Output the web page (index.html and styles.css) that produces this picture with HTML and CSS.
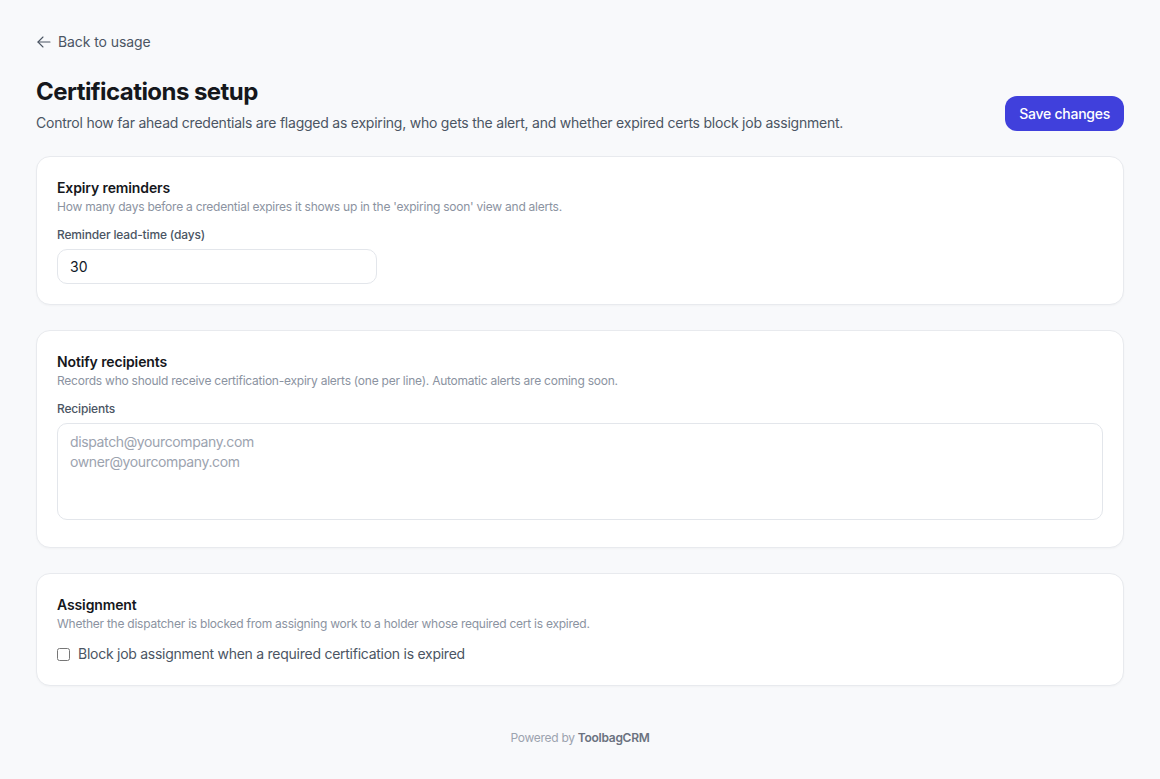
FILE: index.html
```html
<!DOCTYPE html>
<html lang="en">
<head>
<meta charset="utf-8">
<title>Certifications setup</title>
<link rel="stylesheet" href="styles.css">
</head>
<body>
<main class="page">
  <a class="back" href="#">
    <svg class="back-icon" width="16" height="16" viewBox="0 0 24 24" fill="none" stroke="currentColor" stroke-width="1.6" stroke-linecap="round" stroke-linejoin="round"><path d="M10.5 19.5 3 12l7.5-7.5"/><path d="M3 12h18"/></svg>
    <span>Back to usage</span>
  </a>

  <header class="header">
    <div class="header-text">
      <h1 class="title">Certifications setup</h1>
      <p class="subtitle">Control how far ahead credentials are flagged as expiring, who gets the alert, and whether expired certs block job assignment.</p>
    </div>
    <button class="btn-primary" type="button">Save changes</button>
  </header>

  <section class="card">
    <h2 class="card-title">Expiry reminders</h2>
    <p class="card-desc">How many days before a credential expires it shows up in the 'expiring soon' view and alerts.</p>
    <label class="field-label" for="lead">Reminder lead-time (days)</label>
    <input class="input" id="lead" type="text" value="30">
  </section>

  <section class="card">
    <h2 class="card-title">Notify recipients</h2>
    <p class="card-desc">Records who should receive certification-expiry alerts (one per line). Automatic alerts are coming soon.</p>
    <label class="field-label" for="rec">Recipients</label>
    <textarea class="textarea" id="rec" placeholder="dispatch@yourcompany.com&#10;owner@yourcompany.com"></textarea>
  </section>

  <section class="card">
    <h2 class="card-title">Assignment</h2>
    <p class="card-desc">Whether the dispatcher is blocked from assigning work to a holder whose required cert is expired.</p>
    <label class="check-row">
      <input class="checkbox" type="checkbox">
      <span>Block job assignment when a required certification is expired</span>
    </label>
  </section>

  <footer class="footer">Powered by <strong>ToolbagCRM</strong></footer>
</main>
</body>
</html>
```

FILE: styles.css
```css
* { box-sizing: border-box; }

html, body {
  margin: 0;
  padding: 0;
  background: #f8f9fb;
  font-family: Inter, "Noto Sans", sans-serif;
  color: #111827;
}

.page {
  padding: 32px 36px 40px;
  display: flex;
  flex-direction: column;
}

.back {
  display: flex;
  align-items: center;
  gap: 6px;
  align-self: flex-start;
  color: #4b5563;
  text-decoration: none;
  font-size: 14px;
  line-height: 20px;
  letter-spacing: -0.08px;
}

.back-icon { display: block; }

.header {
  display: flex;
  justify-content: space-between;
  align-items: flex-end;
  margin-top: 24px;
  margin-bottom: 23px;
}

.title {
  margin: 0;
  font-size: 24px;
  line-height: 32px;
  font-weight: 700;
  letter-spacing: -0.55px;
  color: #15171c;
}

.subtitle {
  margin: 5px 0 0;
  font-size: 14px;
  line-height: 20px;
  letter-spacing: -0.23px;
  color: #4b5563;
}

.btn-primary {
  font-family: inherit;
  font-size: 14px;
  font-weight: 500;
  line-height: 20px;
  letter-spacing: -0.25px;
  color: #fff;
  background: #4040dc;
  border: none;
  border-radius: 12px;
  padding: 7.5px 14px;
  margin-bottom: 2px;
  cursor: pointer;
}

.card {
  background: #fff;
  border: 1px solid #e8eaee;
  border-radius: 14px;
  box-shadow: 0 1px 2px rgba(16, 24, 40, 0.03);
  padding: 21px 20px 20px;
  margin-bottom: 25px;
  display: flex;
  flex-direction: column;
  align-items: flex-start;
}

.card-last {
  padding-bottom: 21px;
}

.card-title {
  margin: 0;
  font-size: 14px;
  line-height: 20px;
  font-weight: 600;
  letter-spacing: -0.12px;
  color: #15171c;
}

.card-desc {
  margin: 1px 0 0;
  font-size: 12px;
  line-height: 16px;
  letter-spacing: -0.24px;
  color: #8b93a1;
}

.field-label {
  margin-top: 12px;
  font-size: 12px;
  line-height: 16px;
  font-weight: 500;
  letter-spacing: -0.16px;
  color: #4b5563;
}

.input {
  margin-top: 6px;
  width: 320px;
  height: 35px;
  border: 1px solid #e3e6eb;
  border-radius: 10px;
  padding: 0 12px;
  font-family: inherit;
  font-size: 14px;
  color: #111827;
  background: #fff;
  outline: none;
}

.textarea {
  margin-top: 6px;
  margin-bottom: 7px;
  width: 100%;
  height: 97px;
  border: 1px solid #e3e6eb;
  border-radius: 10px;
  padding: 8px 12px;
  font-family: inherit;
  font-size: 14px;
  line-height: 20px;
  letter-spacing: -0.37px;
  color: #111827;
  background: #fff;
  resize: none;
  outline: none;
}

.textarea::placeholder { color: #9ca3af; }

.check-row {
  margin-top: 12px;
  margin-bottom: 1px;
  display: flex;
  align-items: center;
  gap: 8px;
  font-size: 14px;
  line-height: 20px;
  letter-spacing: -0.26px;
  color: #4b5563;
}

.checkbox {
  margin: 0;
  width: 13px;
  height: 13px;
}

.footer {
  margin-top: 19px;
  text-align: center;
  font-size: 12px;
  line-height: 16px;
  letter-spacing: -0.28px;
  color: #9ca3af;
}

.footer strong {
  font-weight: 600;
  color: #6b7280;
}
```
